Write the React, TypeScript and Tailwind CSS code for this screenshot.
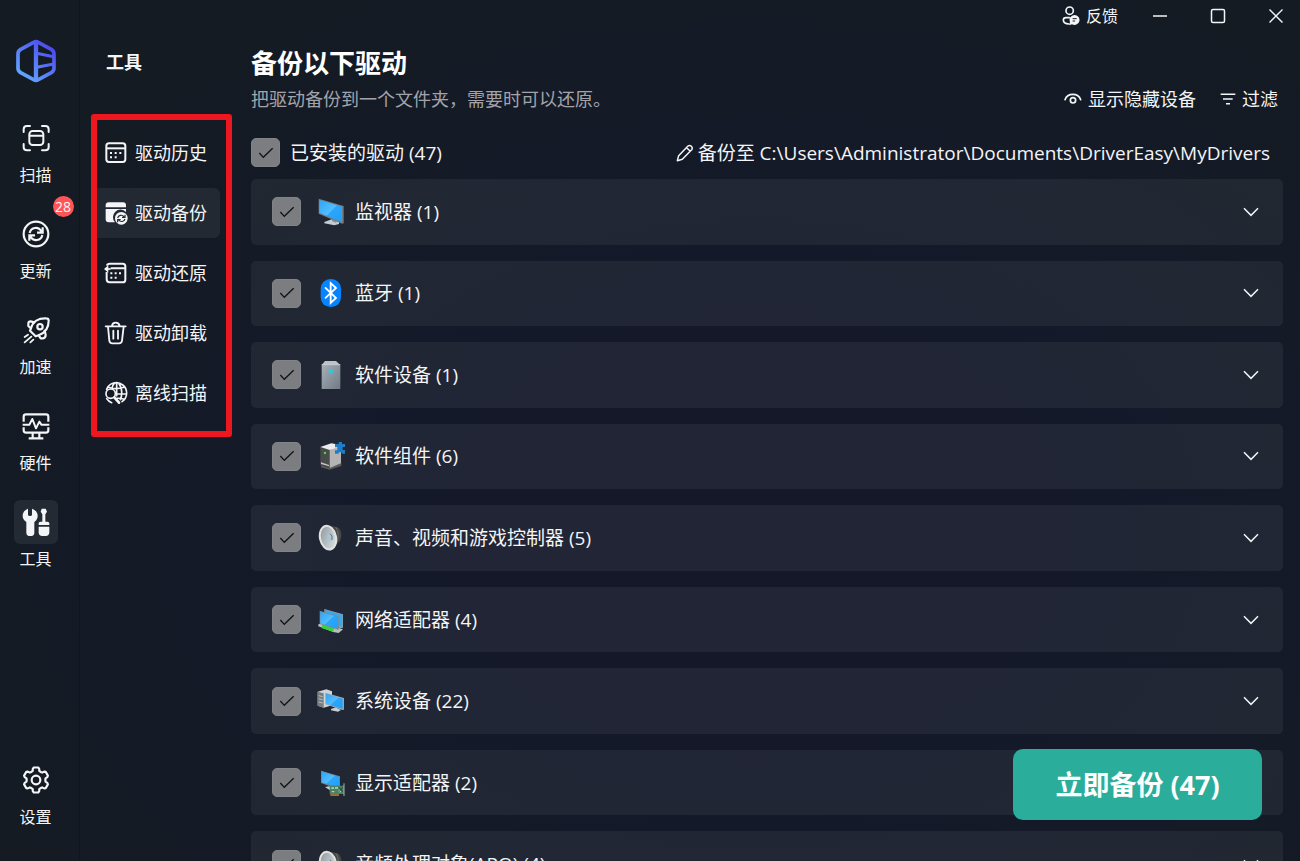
import React, { useState } from "react";

/* ---------- Line icons ---------- */

function Logo() {
  return (
    <svg viewBox="0 0 126 132" className="h-11 w-[42px]" fill="none" stroke="url(#logo-stroke)" strokeWidth="11" strokeLinejoin="round" aria-hidden="true">
      <defs>
        <linearGradient id="logo-stroke" gradientUnits="userSpaceOnUse" x1="20" y1="110" x2="100" y2="20">
          <stop offset="0" stopColor="#62a6ff" />
          <stop offset="1" stopColor="#4d4cf0" />
        </linearGradient>
      </defs>
      <path d="M56 10Q63 6 70 10L109 31Q117 36 117 44V88Q117 96 109 101L70 122Q63 126 56 122L17 101Q9 96 9 88V44Q9 36 17 31Z" />
      <path d="M63 8V124" strokeWidth="13" />
      <path d="M65 43L116 53M65 85L116 75" strokeWidth="9" />
    </svg>
  );
}

function ScanIcon() {
  return (
    <svg viewBox="0 0 84 84" className="size-7" fill="none" stroke="currentColor" strokeWidth="6" strokeLinecap="round" strokeLinejoin="round" aria-hidden="true">
      <path d="M5 24V16Q5 6 15 6H24M60 6H70Q80 6 80 16V24M80 60V70Q80 79 70 79H60M24 79H15Q5 79 5 70V60" />
      <rect x="22" y="21" width="42" height="42" rx="10" />
      <path d="M23 35H63" />
    </svg>
  );
}

function UpdateIcon() {
  return (
    <svg viewBox="0 0 84 84" className="size-7" fill="none" stroke="currentColor" strokeWidth="6.500" aria-hidden="true">
      <circle cx="42" cy="42" r="37" />
      <path d="M23 39C27 21 49 18 59 35M62 22V38H45" />
      <path d="M61 45C57 63 35 66 25 49M22 62V46H39" />
    </svg>
  );
}

function BoostIcon() {
  return (
    <svg viewBox="0 0 84 84" className="size-7" fill="none" stroke="currentColor" strokeWidth="6.500" strokeLinecap="round" strokeLinejoin="round" aria-hidden="true">
      <path d="M27 37C32 16 50 6 72 7Q80 7 80 14C80 36 68 51 50 58L41 61L24 44Z" />
      <circle cx="54" cy="32" r="8" />
      <path d="M37 19L26 16Q19 16 19 23L19 30L27 37M68 44L71 56Q71 66 63 67L56 67L50 58" />
      <path d="M18 56L8 63M28 62L8 79M34 71L25 79" strokeWidth="5.500" />
    </svg>
  );
}

function HardwareIcon() {
  return (
    <svg viewBox="0 0 84 84" className="size-7" fill="none" stroke="currentColor" strokeWidth="6.500" strokeLinejoin="round" aria-hidden="true">
      <path d="M5 29V14Q5 7 12 7H72Q79 7 79 14V29M79 46V55Q79 62 72 62H12Q5 62 5 55V46" />
      <path d="M2 38H22L31 21L42 49L52 29L58 38H82" strokeWidth="6" />
      <path d="M32 62V77M52 62V77M20 79H64" />
    </svg>
  );
}

function ToolsIcon() {
  return (
    <svg viewBox="0 0 84 84" className="size-7" fill="currentColor" aria-hidden="true">
      <path d="M18 2V20Q18 24 24 24T30 20V2Q47 8 47 24Q47 35 37 42V74Q37 84 25 84T13 74V42Q2 35 2 24Q2 8 18 2Z" />
      <path d="M59 2H71L75 11L70 19V41H76Q82 41 82 46V51H50V46Q50 41 55 41H61V19L56 11Z" />
      <path d="M50 56H82V73Q82 84 71 84H61Q50 84 50 73Z" />
    </svg>
  );
}

const gearPath =
  [0, 1, 2, 3, 4, 5]
    .map((tooth) =>
      [
        [38, -10],
        [38, 10],
        [35, 16],
        [29, 20],
        [28, 30],
        [29, 40],
        [35, 44],
      ]
        .map(([radius, offset], i) => {
          const angle = ((tooth * 60 - 90 + offset) * Math.PI) / 180;
          const x = (42 + radius * Math.cos(angle)).toFixed(1);
          const y = (42 + radius * Math.sin(angle)).toFixed(1);
          return `${tooth === 0 && i === 0 ? "M" : "L"}${x} ${y}`;
        })
        .join("")
    )
    .join("") + "Z";

function SettingsIcon() {
  return (
    <svg viewBox="0 0 84 84" className="size-7" fill="none" stroke="currentColor" strokeWidth="6.500" strokeLinejoin="round" aria-hidden="true">
      <path d={gearPath} />
      <circle cx="42" cy="42" r="13" />
    </svg>
  );
}

function HistoryIcon() {
  return (
    <svg viewBox="0 0 72 72" className="size-6" fill="none" stroke="currentColor" strokeWidth="6" aria-hidden="true">
      <rect x="7" y="7" width="57" height="56" rx="8" />
      <path d="M8 22H64" />
      <path d="M18 36H24M32 36H38M46 36H52M18 49H24M32 49H38" strokeWidth="6" />
    </svg>
  );
}

function BackupIcon() {
  return (
    <svg viewBox="0 0 72 72" className="size-6" fill="currentColor" aria-hidden="true">
      <path d="M5 19V13Q5 4 14 4H57Q66 4 66 13V19Z" />
      <path d="M5 24H66V33A22 22 0 0 0 33 64H14Q5 64 5 55Z" />
      <circle cx="52" cy="52" r="19" />
      <path d="M41 51C43 42 54 40 60 47M63 41V49H54M63 54C60 63 49 64 44 57M41 64V56H50" fill="none" stroke="#222932" strokeWidth="3.500" />
    </svg>
  );
}

function RestoreIcon() {
  return (
    <svg viewBox="0 0 72 72" className="size-6" fill="none" stroke="currentColor" strokeWidth="6" aria-hidden="true">
      <path d="M8 33V55Q8 64 17 64H56Q64 64 64 56V16Q64 8 56 8H17Q10 8 9 14M20 22H64" />
      <path d="M0 24L13 13V35Z" fill="currentColor" stroke="none" />
      <path d="M9 24H20" strokeWidth="5" />
      <path d="M19 37H25M32 37H38M45 37H51M19 50H25M32 50H38" />
    </svg>
  );
}

function TrashIcon() {
  return (
    <svg viewBox="0 0 72 72" className="size-6" fill="none" stroke="currentColor" strokeWidth="5.500" strokeLinecap="round" strokeLinejoin="round" aria-hidden="true">
      <path d="M5 16H65M24 15Q25 5 35 5T47 15M12 17L16 59Q17 67 25 67H45Q53 67 54 59L59 17M28 29V53M42 29V53" />
    </svg>
  );
}

function OfflineIcon() {
  return (
    <svg viewBox="0 0 72 72" className="size-6" fill="none" stroke="currentColor" strokeWidth="5" strokeLinecap="round" aria-hidden="true">
      <path d="M8 25A31 31 0 1 1 54 62M14 19Q36 27 60 19M31 7Q24 14 24 22M44 7Q54 20 53 37Q53 48 49 56M40 39H67M39 52Q50 51 61 55M38 6V44M8 53Q13 61 23 65" />
      <circle cx="20" cy="38" r="14" />
      <path d="M31 49L45 65" strokeWidth="8" />
    </svg>
  );
}

function FeedbackIcon() {
  return (
    <svg viewBox="0 0 54 60" className="h-5 w-[18px]" fill="none" stroke="currentColor" strokeWidth="5" strokeLinecap="round" aria-hidden="true">
      <circle cx="23" cy="14" r="11" />
      <path d="M22 35H12Q4 35 4 42Q4 53 21 54" />
      <path d="M37 27A15 15 0 1 1 30 55L22 58L24 48A15 15 0 0 1 37 27Z" fill="currentColor" stroke="none" />
      <path d="M33 38H43M33 45H38" stroke="#141b24" strokeWidth="3" />
    </svg>
  );
}

function EyeIcon() {
  return (
    <svg viewBox="0 0 54 36" className="h-3 w-[18px]" fill="none" stroke="currentColor" strokeWidth="5" strokeLinecap="round" aria-hidden="true">
      <path d="M3 20C10 -1 43 -1 50 20" />
      <circle cx="27" cy="22" r="8" />
    </svg>
  );
}

function FilterIcon() {
  return (
    <svg viewBox="0 0 48 36" className="h-3 w-4" fill="none" stroke="currentColor" strokeWidth="4.500" aria-hidden="true">
      <path d="M2 4H46M9 18H38M18 32H30" />
    </svg>
  );
}

function PencilIcon() {
  return (
    <svg viewBox="0 0 54 54" className="size-[18px]" fill="none" stroke="currentColor" strokeWidth="4.500" strokeLinejoin="round" aria-hidden="true">
      <path d="M4 50L8 35L36 6Q41 2 46 7T47 17L19 46ZM32 11L42 21" />
    </svg>
  );
}

function ChevronIcon() {
  return (
    <svg viewBox="0 0 48 30" className="h-2.5 w-4" fill="none" stroke="currentColor" strokeWidth="4.500" aria-hidden="true">
      <path d="M3 4L24 25L45 4" />
    </svg>
  );
}

/* ---------- Device icons ---------- */

function Gradients() {
  return (
    <svg className="absolute size-0" aria-hidden="true">
      <defs>
        <linearGradient id="screen" x1="0" y1="0" x2="1" y2="1">
          <stop offset="0" stopColor="#2fa4f5" />
          <stop offset="0.5" stopColor="#52bdff" />
          <stop offset="0.52" stopColor="#2ba6fb" />
          <stop offset="1" stopColor="#1fa0fa" />
        </linearGradient>
        <linearGradient id="metal" x1="0" y1="0" x2="1" y2="1">
          <stop offset="0" stopColor="#a7b0b7" />
          <stop offset="1" stopColor="#6f7a83" />
        </linearGradient>
        <linearGradient id="cone" x1="0" y1="0" x2="1" y2="1">
          <stop offset="0" stopColor="#8d969b" />
          <stop offset="1" stopColor="#dce5ea" />
        </linearGradient>
      </defs>
    </svg>
  );
}

const deviceSvg = { viewBox: "0 0 84 84", className: "size-7 shrink-0", "aria-hidden": true } as const;

function MonitorDevice() {
  return (
    <svg {...deviceSvg}>
      <path d="M22 72L44 64L66 72V78L52 82L22 76Z" fill="#c3ccd2" />
      <path d="M45 60L58 65V75L45 70Z" fill="#8a949c" />
      <path d="M5 2L80 24V76L75 77L5 47Z" fill="#747b81" />
      <path d="M7 5L75 26V73L7 44Z" fill="url(#screen)" />
    </svg>
  );
}

function BluetoothDevice() {
  return (
    <svg {...deviceSvg}>
      <rect x="11" y="0" width="61" height="84" rx="29" fill="#0683ff" />
      <path d="M24 25L57 57L41 72V12L57 27L24 58" fill="none" stroke="#fff" strokeWidth="5.500" />
    </svg>
  );
}

function SoftwareDevice() {
  return (
    <svg {...deviceSvg}>
      <path d="M14 12L24 0H57L70 12Z" fill="#bbc3c8" />
      <path d="M14 11H70V84H14Z" fill="url(#metal)" />
      <path d="M14 11H70" stroke="#d2d9dd" strokeWidth="2" />
      <path d="M35 28L44 25L49 31L43 39L36 36Z" fill="#20cfe6" />
    </svg>
  );
}

function ComponentDevice() {
  return (
    <svg {...deviceSvg}>
      <path d="M12 70L36 77L73 62V72L38 83L12 76Z" fill="#5b5b5b" />
      <path d="M10 15L38 23V78L10 68Z" fill="#494b4a" />
      <path d="M38 23L72 14V64L38 78Z" fill="#b4b4b4" />
      <path d="M10 15L43 4L72 9V15L38 24Z" fill="#ececec" />
      <path d="M12 61L36 69V73L12 66Z" fill="#c5c5c5" />
      <circle cx="24" cy="33" r="3.500" fill="#45e542" />
      <path d="M54 6H65V0H75V6H84V15H77V24H84V35H74V31H65V35H54V25H61V16H54Z" fill="#207cc4" />
    </svg>
  );
}

function SpeakerDevice() {
  return (
    <svg {...deviceSvg}>
      <path d="M35 5Q52 6 66 12Q80 30 68 52L44 76Z" fill="#454749" />
      <path d="M56 9Q71 28 57 61" fill="none" stroke="#6c6f71" strokeWidth="3" />
      <ellipse cx="33" cy="41" rx="27" ry="39" transform="rotate(-12 33 41)" fill="#e2e2df" />
      <ellipse cx="33" cy="41" rx="21" ry="33" transform="rotate(-12 33 41)" fill="url(#cone)" />
      <ellipse cx="39" cy="40" rx="8" ry="11" fill="#a9c6d4" />
      <path d="M39 29Q48 34 45 48" fill="none" stroke="#63757e" strokeWidth="3" />
    </svg>
  );
}

function NetworkDevice() {
  return (
    <svg {...deviceSvg}>
      <path d="M22 9L78 25V65L71 67L22 50Z" fill="#929da5" />
      <path d="M24 11L76 27V62L24 48Z" fill="#33a9ef" />
      <path d="M4 55L20 52L78 70L65 81L48 78L4 61Z" fill="#b4c0bd" />
      <path d="M15 58L28 55L51 65L49 77L15 67Z" fill="#39cf43" />
      <path d="M8 14L65 31V72L8 54Z" fill="#7e8992" />
      <path d="M10 17L63 33V68L10 52Z" fill="url(#screen)" />
    </svg>
  );
}

function SystemDevice() {
  return (
    <svg {...deviceSvg}>
      <path d="M2 14L28 7L45 13V55L20 62L2 56Z" fill="#d0d4d5" />
      <path d="M2 14L20 19V62L2 56Z" fill="#777d80" />
      <path d="M5 26L17 29M5 35L17 38M5 45L17 48" stroke="#b9bec0" strokeWidth="3" />
      <path d="M42 66L56 61L72 69L63 74L42 70Z" fill="#c5ced3" />
      <path d="M25 17L81 33V68L76 69L25 52Z" fill="#9aa5ad" />
      <path d="M27 20L77 35V65L27 50Z" fill="url(#screen)" />
    </svg>
  );
}

function DisplayDevice() {
  return (
    <svg {...deviceSvg}>
      <path d="M24 54L45 50L55 62L39 64Z" fill="#c7d0d3" />
      <path d="M12 5L69 22V61L62 61L12 42Z" fill="#777e84" />
      <path d="M14 7L66 24V56L14 40Z" fill="url(#screen)" />
      <path d="M38 50H81V75H38Z" fill="#4a8063" />
      <path d="M43 55H51V60H43ZM54 54H63V59H54ZM65 62H72V70H65ZM44 66H52V70H44Z" fill="#a5d3a7" />
      <path d="M66 55L77 68M77 55L67 68" stroke="#243f35" strokeWidth="3" />
      <path d="M40 76H66V80H40Z" fill="#d9913b" />
      <path d="M81 43V81" stroke="#aab2b4" strokeWidth="3" />
    </svg>
  );
}

/* ---------- Data ---------- */

const primaryNav = [
  { label: "扫描", icon: <ScanIcon /> },
  { label: "更新", icon: <UpdateIcon />, badge: 28 },
  { label: "加速", icon: <BoostIcon /> },
  { label: "硬件", icon: <HardwareIcon /> },
  { label: "工具", icon: <ToolsIcon />, active: true },
];

const toolNav = [
  { label: "驱动历史", icon: <HistoryIcon /> },
  { label: "驱动备份", icon: <BackupIcon />, active: true },
  { label: "驱动还原", icon: <RestoreIcon /> },
  { label: "驱动卸载", icon: <TrashIcon /> },
  { label: "离线扫描", icon: <OfflineIcon /> },
];

const groups = [
  { id: "monitor", label: "监视器 (1)", icon: <MonitorDevice /> },
  { id: "bluetooth", label: "蓝牙 (1)", icon: <BluetoothDevice /> },
  { id: "software-device", label: "软件设备 (1)", icon: <SoftwareDevice /> },
  { id: "software-component", label: "软件组件 (6)", icon: <ComponentDevice /> },
  { id: "sound", label: "声音、视频和游戏控制器 (5)", icon: <SpeakerDevice /> },
  { id: "network", label: "网络适配器 (4)", icon: <NetworkDevice /> },
  { id: "system", label: "系统设备 (22)", icon: <SystemDevice /> },
  { id: "display", label: "显示适配器 (2)", icon: <DisplayDevice /> },
  { id: "apo", label: "音频处理对象(APO) (4)", icon: <SpeakerDevice /> },
];

/* ---------- Controls ---------- */

function CheckBox({ id, checked, onChange }: { id: string; checked: boolean; onChange: () => void }) {
  return (
    <span className="grid size-[29px] shrink-0 place-items-center">
      <input
        id={id}
        type="checkbox"
        checked={checked}
        onChange={onChange}
        className="peer col-start-1 row-start-1 size-full appearance-none rounded-[5px] border border-[#808388] bg-transparent checked:bg-[#7b7d81]"
      />
      <svg viewBox="0 0 48 36" className="pointer-events-none col-start-1 row-start-1 hidden h-3 w-4 peer-checked:block" fill="none" stroke="#111417" strokeWidth="4" aria-hidden="true">
        <path d="M4 18L16 31L44 4" />
      </svg>
    </span>
  );
}

function NavItem({ label, icon, badge, active }: { label: string; icon: React.ReactNode; badge?: number; active?: boolean }) {
  return (
    <button type="button" className="relative flex flex-col items-center gap-[5px]">
      <span className={active ? "grid size-11 place-items-center rounded-md bg-[#232a33]" : "grid size-11 place-items-center"}>{icon}</span>
      <span className="text-base leading-5">{label}</span>
      {badge && (
        <span className="absolute -top-4 left-[39px] grid size-[21px] place-items-center rounded-full bg-[#ff5557] text-sm leading-none">{badge}</span>
      )}
    </button>
  );
}

export default function App() {
  const [checked, setChecked] = useState<string[]>(groups.map((g) => g.id));
  const allChecked = checked.length === groups.length;
  const toggle = (id: string) =>
    setChecked((list) => (list.includes(id) ? list.filter((x) => x !== id) : [...list, id]));

  return (
    <div className="relative flex h-screen overflow-hidden bg-[#141b23] bg-[radial-gradient(ellipse_at_58%_62%,#141829_0%,#14192a_35%,#141b23_80%)] font-['Open_Sans','Noto_Sans_CJK_SC',sans-serif] text-lg text-[#f4f5f6]">
      <Gradients />

      <aside className="flex w-20 shrink-0 flex-col items-center border-r border-[#10161d] pt-[39px] pr-2 pb-[34px]">
        <Logo />
        <nav className="mt-[33px] flex flex-col items-center gap-[27px]">
          {primaryNav.map((item) => (
            <NavItem key={item.label} {...item} />
          ))}
        </nav>
        <div className="mt-auto">
          <NavItem label="设置" icon={<SettingsIcon />} />
        </div>
      </aside>

      <aside className="w-[171px] shrink-0 pt-[50px] pl-[11px]">
        <h2 className="pl-[15px] leading-6 font-bold">工具</h2>
        <nav className="mt-10 flex w-[141px] flex-col gap-2.5 rounded-[3px] border-6 border-[#ee161f] pt-2 pr-1.5 pb-[13px]">
          {toolNav.map((item) => (
            <button
              key={item.label}
              type="button"
              className={
                item.active
                  ? "flex h-[50px] items-center gap-[7px] rounded-r-md bg-[#222932] pl-[7px] whitespace-nowrap"
                  : "flex h-[50px] items-center gap-[7px] pl-[7px] whitespace-nowrap"
              }
            >
              {item.icon}
              {item.label}
            </button>
          ))}
        </nav>
      </aside>

      <main className="flex min-w-0 flex-1 flex-col">
        <header className="flex h-8 shrink-0 items-center justify-end gap-[26px] pr-2">
          <button type="button" className="flex items-center gap-1.5 text-base">
            <FeedbackIcon />
            反馈
          </button>
          <button type="button" aria-label="最小化" className="grid h-8 w-8 place-items-center">
            <svg viewBox="0 0 16 16" className="size-4" stroke="currentColor" strokeWidth="1.500"><path d="M1 8H15" /></svg>
          </button>
          <button type="button" aria-label="最大化" className="grid h-8 w-8 place-items-center">
            <svg viewBox="0 0 16 16" className="size-4" fill="none" stroke="currentColor" strokeWidth="1.500"><rect x="1.500" y="1.500" width="13" height="13" rx="1.500" /></svg>
          </button>
          <button type="button" aria-label="关闭" className="grid h-8 w-8 place-items-center">
            <svg viewBox="0 0 16 16" className="size-4" stroke="currentColor" strokeWidth="1.400"><path d="M1.500 1.500L14.500 14.500M14.500 1.500L1.500 14.500" /></svg>
          </button>
        </header>

        <div className="flex min-h-0 flex-1 flex-col pt-[13px] pr-[17px]">
          <h1 className="text-[26px] leading-9 font-bold text-white">备份以下驱动</h1>
          <div className="mt-1.5 flex items-center justify-between pr-[5px] leading-6">
            <p className="text-[#a3a4ab]">把驱动备份到一个文件夹，需要时可以还原。</p>
            <div className="flex gap-6">
              <button type="button" className="flex items-center gap-1.5">
                <EyeIcon />
                显示隐藏设备
              </button>
              <button type="button" className="flex items-center gap-1.5">
                <FilterIcon />
                过滤
              </button>
            </div>
          </div>

          <div className="mt-[27px] flex items-center justify-between pr-[13px] text-[19px] leading-6">
            <div className="flex items-center gap-2.5">
              <CheckBox id="all" checked={allChecked} onChange={() => setChecked(allChecked ? [] : groups.map((g) => g.id))} />
              <label htmlFor="all">已安装的驱动 (47)</label>
            </div>
            <button type="button" className="flex items-center gap-1">
              <PencilIcon />
              备份至 C:\Users\Administrator\Documents\DriverEasy\MyDrivers
            </button>
          </div>

          <ul className="mt-3 -mb-9 grid flex-1 auto-rows-[minmax(64px,1fr)] gap-4 text-[19px] leading-6">
            {groups.map((group) => (
              <li key={group.id} className="flex items-center rounded-[5px] bg-white/6 pr-4 pl-[21px]">
                <CheckBox id={group.id} checked={checked.includes(group.id)} onChange={() => toggle(group.id)} />
                <label htmlFor={group.id} className="ml-4 flex items-center gap-2.5">
                  {group.icon}
                  {group.label}
                </label>
                <button type="button" aria-label={`展开 ${group.label}`} className="ml-auto grid size-8 place-items-center">
                  <ChevronIcon />
                </button>
              </li>
            ))}
          </ul>
        </div>
      </main>

      <button type="button" className="absolute right-[38px] bottom-[41px] h-[71px] w-[249px] rounded-[10px] bg-[#2aae9b] text-[27px] font-bold text-white">
        立即备份 (47)
      </button>
    </div>
  );
}
